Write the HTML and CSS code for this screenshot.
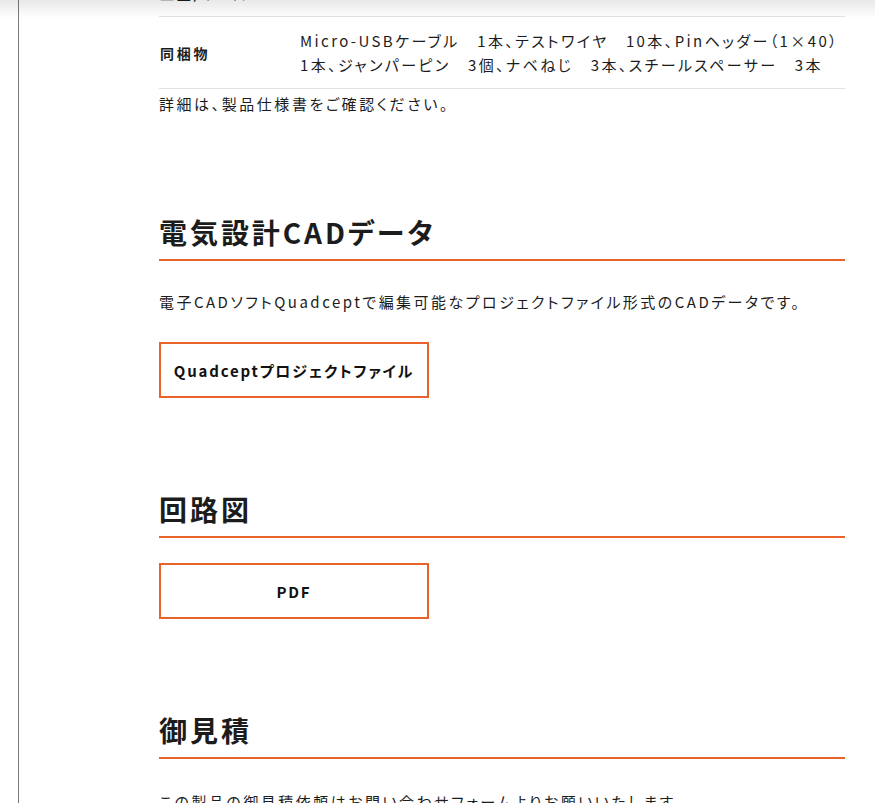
FILE: index.html
```html
<!DOCTYPE html>
<html lang="ja">
<head>
<meta charset="utf-8">
<title>製品情報</title>
<link rel="stylesheet" href="styles.css">
</head>
<body>
<div class="top-shadow"></div>
<div class="page">
  <main class="content">
    <div class="spec">
      <div class="spec-row spec-row--prev">
        <div class="spec-label">重量/サイズ</div>
        <div class="spec-value"></div>
      </div>
      <div class="spec-row">
        <div class="spec-label">同梱物</div>
        <div class="spec-value"><span class="line">Micro-USBケーブル　1本、テストワイヤ　10本、Pinヘッダー（1×40）</span><span class="line">1本、ジャンパーピン　3個、ナベねじ　3本、スチールスペーサー　3本</span></div>
      </div>
    </div>
    <p class="note">詳細は、製品仕様書をご確認ください。</p>

    <section class="section">
      <h2 class="section-title">電気設計CADデータ</h2>
      <p class="text">電子CADソフトQuadceptで編集可能なプロジェクトファイル形式のCADデータです。</p>
      <a class="btn" href="#">Quadceptプロジェクトファイル</a>
    </section>

    <section class="section">
      <h2 class="section-title">回路図</h2>
      <a class="btn" href="#">PDF</a>
    </section>

    <section class="section">
      <h2 class="section-title">御見積</h2>
      <p class="text text--last">この製品の御見積依頼はお問い合わせフォームよりお願いいたします。</p>
    </section>
  </main>
</div>
</body>
</html>
```

FILE: styles.css
```css
* { box-sizing: border-box; }
html, body { margin: 0; padding: 0; background: #fff; }
body {
  font-family: "Noto Sans CJK JP", "Noto Sans", sans-serif;
  font-feature-settings: "palt";
  color: #1c1c1c;
  overflow: hidden;
}
.top-shadow {
  position: fixed;
  top: 0; left: 0; right: 0;
  height: 18px;
  background: linear-gradient(to bottom, rgba(0,0,0,0.09), rgba(0,0,0,0));
  pointer-events: none;
  z-index: 5;
}
.page {
  margin-left: 18px;
  border-left: 1px solid #7a7a7a;
  min-height: 100vh;
}
.content {
  width: 826px;
  padding-left: 140px;
}
.spec { margin-top: -31px; }
.spec-row {
  display: grid;
  grid-template-columns: 141px 1fr;
  align-items: center;
  border-bottom: 1px solid #e2e2e2;
  padding: 12px 0 11px;
}
.spec-row--prev { min-height: 48px; }
.spec-label {
  font-size: 14px;
  font-weight: 700;
  letter-spacing: 0.2em;
  padding-left: 1px;
}
.spec-value {
  font-size: 15px;
  line-height: 24px;
  letter-spacing: 0.16em;
}
.line {
  display: block;
  white-space: nowrap;
}
.note {
  margin: 3px 0 0;
  font-size: 15px;
  line-height: 24px;
  letter-spacing: 0.17em;
}
.section { padding-top: 95px; }
.section + .section { padding-top: 90px; }
.section-title {
  margin: 0;
  font-size: 28px;
  line-height: 42px;
  font-weight: 700;
  letter-spacing: 0.105em;
  padding-bottom: 6px;
  border-bottom: 2px solid #e8622a;
}
.text {
  margin: 29px 0 0;
  font-size: 15px;
  line-height: 24px;
  letter-spacing: 0.165em;
  white-space: nowrap;
}
.text--last { margin-top: 31px; }
.btn {
  display: flex;
  align-items: center;
  justify-content: center;
  width: 270px;
  height: 56px;
  margin-top: 28px;
  border: 2px solid #e8622a;
  color: #111;
  text-decoration: none;
  font-size: 15px;
  font-weight: 700;
  letter-spacing: 0.12em;
}
.section-title + .btn { margin-top: 25px; }
```
